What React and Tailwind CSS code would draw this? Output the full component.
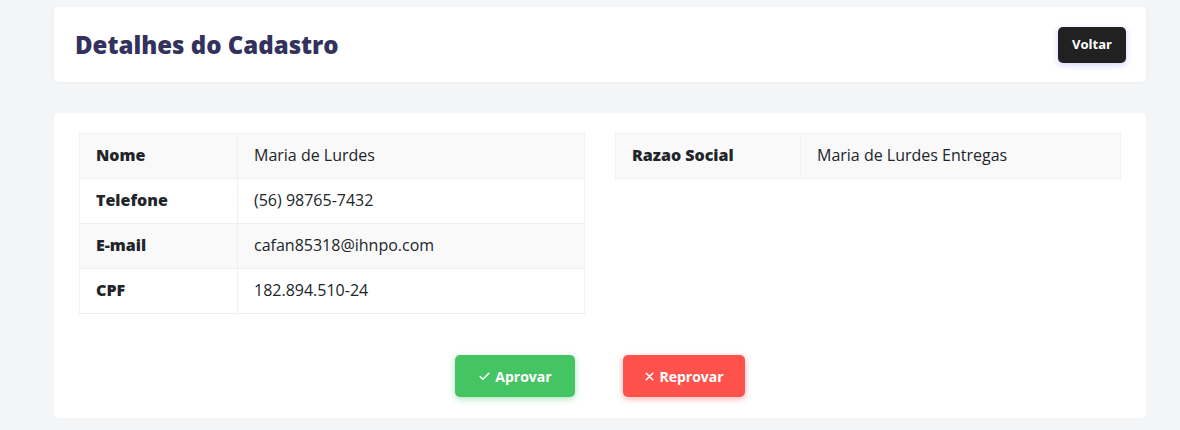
import React from "react";

const dados = [
  { label: "Nome", value: "Maria de Lurdes" },
  { label: "Telefone", value: "(56) 98765-7432" },
  { label: "E-mail", value: "cafan85318@ihnpo.com" },
  { label: "CPF", value: "182.894.510-24" },
];

const empresa = [{ label: "Razao Social", value: "Maria de Lurdes Entregas" }];

const Tabela = ({ rows, labelWidth }) => (
  <table className="w-full border-collapse self-start">
    <tbody>
      {rows.map((r, i) => (
        <tr key={r.label} className={i % 2 === 0 ? "bg-[#f9f9f9]" : "bg-white"}>
          <td
            className={`${labelWidth} h-[45px] border border-[#f0f0f0] px-4 pb-[3px] text-[16px] font-extrabold text-[#212529]`}
          >
            {r.label}
          </td>
          <td className="h-[45px] border border-[#f0f0f0] px-4 pb-[3px] text-[16px] text-[#212529]">
            {r.value}
          </td>
        </tr>
      ))}
    </tbody>
  </table>
);

export default function App() {
  return (
    <div
      className="min-h-screen bg-[#f4f5f7] pl-[54px] pr-[34px] pt-[7px]"
      style={{ fontFamily: "'Open Sans', 'Liberation Sans', sans-serif" }}
    >
      <div className="flex h-[75px] items-center justify-between rounded bg-white px-[21px] shadow-[0_1px_3px_rgba(0,0,0,0.04)]">
        <h1 className="text-[24px] font-extrabold text-[#32325d]">Detalhes do Cadastro</h1>
        <button className="mr-[-1px] h-[36px] w-[68px] rounded-[5px] bg-[#212121] text-[13px] font-bold text-white shadow-[0_2px_6px_rgba(80,80,255,0.25)]">
          Voltar
        </button>
      </div>

      <div className="mt-[31px] rounded bg-white px-[25px] pt-[20px] pb-[21px]">
        <div className="grid grid-cols-2 gap-[30px]">
          <Tabela rows={dados} labelWidth="w-[158px]" />
          <Tabela rows={empresa} labelWidth="w-[185px]" />
        </div>
        <div className="mt-[41px] flex justify-center gap-[48px]">
          <button className="flex h-[42px] w-[120px] items-center justify-center gap-1 rounded-[5px] bg-[#45c463] text-[14px] font-bold text-white shadow-[0_2px_6px_rgba(69,196,99,0.45)]">
            <svg width="13" height="13" viewBox="0 0 24 24" fill="none" stroke="currentColor" strokeWidth="3" strokeLinecap="round" strokeLinejoin="round">
              <path d="M4 12l5 5L20 6" />
            </svg>
            Aprovar
          </button>
          <button className="flex h-[42px] w-[122px] items-center justify-center gap-1 rounded-[5px] bg-[#ff524d] text-[14px] font-bold text-white shadow-[0_2px_6px_rgba(255,82,77,0.45)]">
            <svg width="11" height="11" viewBox="0 0 24 24" fill="none" stroke="currentColor" strokeWidth="3.5" strokeLinecap="round">
              <path d="M5 5l14 14M19 5L5 19" />
            </svg>
            Reprovar
          </button>
        </div>
      </div>
    </div>
  );
}
